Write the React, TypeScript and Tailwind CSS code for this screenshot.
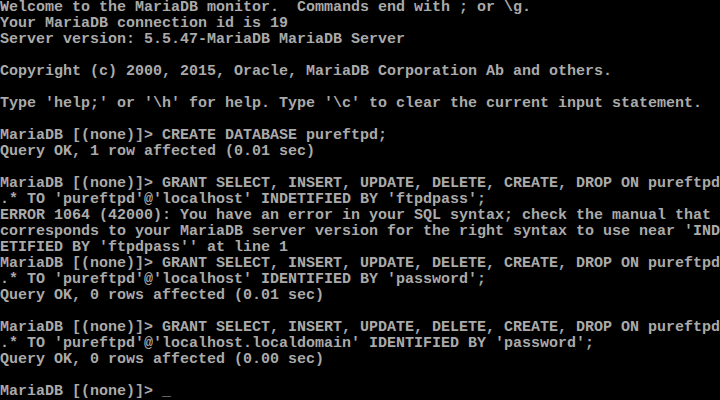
const lines = [
  "Welcome to the MariaDB monitor.  Commands end with ; or \\g.",
  "Your MariaDB connection id is 19",
  "Server version: 5.5.47-MariaDB MariaDB Server",
  "",
  "Copyright (c) 2000, 2015, Oracle, MariaDB Corporation Ab and others.",
  "",
  "Type 'help;' or '\\h' for help. Type '\\c' to clear the current input statement.",
  "",
  "MariaDB [(none)]> CREATE DATABASE pureftpd;",
  "Query OK, 1 row affected (0.01 sec)",
  "",
  "MariaDB [(none)]> GRANT SELECT, INSERT, UPDATE, DELETE, CREATE, DROP ON pureftpd",
  ".* TO 'pureftpd'@'localhost' INDETIFIED BY 'ftpdpass';",
  "ERROR 1064 (42000): You have an error in your SQL syntax; check the manual that",
  "corresponds to your MariaDB server version for the right syntax to use near 'IND",
  "ETIFIED BY 'ftpdpass'' at line 1",
  "MariaDB [(none)]> GRANT SELECT, INSERT, UPDATE, DELETE, CREATE, DROP ON pureftpd",
  ".* TO 'pureftpd'@'localhost' IDENTIFIED BY 'password';",
  "Query OK, 0 rows affected (0.01 sec)",
  "",
  "MariaDB [(none)]> GRANT SELECT, INSERT, UPDATE, DELETE, CREATE, DROP ON pureftpd",
  ".* TO 'pureftpd'@'localhost.localdomain' IDENTIFIED BY 'password';",
  "Query OK, 0 rows affected (0.00 sec)",
  "",
  "MariaDB [(none)]> _",
]

export default function App() {
  return (
    <div className="w-[720px] h-[400px] bg-black overflow-hidden">
      {/* console rows, 80x25 at 9x16 */}
      <div className="flex flex-col font-['Liberation_Mono',monospace] text-[15px] leading-[16px] font-bold text-[#aaaaaa]">
        {lines.map((line, i) => (
          <div key={i} className="h-4 whitespace-pre">
            {line}
          </div>
        ))}
      </div>
    </div>
  )
}
